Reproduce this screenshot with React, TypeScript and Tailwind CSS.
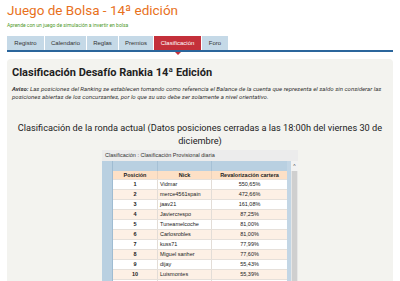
const tabs = ['Registro', 'Calendario', 'Reglas', 'Premios', 'Clasificación', 'Foro']
const tabWidths = ['w-[37px]', 'w-[41px]', 'w-[31px]', 'w-[34px]', 'w-[47px]', 'w-[26px]']

const ranking = [
  { pos: 1, nick: 'Vidmar', value: '550,65%' },
  { pos: 2, nick: 'merce4561spain', value: '472,66%' },
  { pos: 3, nick: 'jaav21', value: '161,08%' },
  { pos: 4, nick: 'Javiercrespo', value: '87,25%' },
  { pos: 5, nick: 'Tuneamelcoche', value: '81,00%' },
  { pos: 6, nick: 'Carlosrobles', value: '81,00%' },
  { pos: 7, nick: 'kuss71', value: '77,99%' },
  { pos: 8, nick: 'Miguel sanher', value: '77,60%' },
  { pos: 9, nick: 'dijay', value: '55,43%' },
  { pos: 10, nick: 'Luismontes', value: '55,39%' },
]

export default function App() {
  return (
    <div className="h-[281px] w-[400px] overflow-hidden bg-white px-[7px] font-['Roboto',sans-serif] text-[#222]">
      <h1 className="pt-px text-[13.5px] leading-[18px] text-[#e8711c]">Juego de Bolsa - 14ª edición</h1>
      <p className="mt-[3px] text-[5px] leading-[7px] text-[#4f9a2a]">Aprende con un juego de simulación a invertir en bolsa</p>

      <nav className="mt-[7px] flex gap-px border-b-2 border-[#2b669c] font-['Liberation_Sans',sans-serif]">
        {tabs.map((tab, i) => {
          const active = tab === 'Clasificación'
          return (
            <div
              key={tab}
              className={`relative flex h-[14px] items-center justify-center text-[6px] ${tabWidths[i]} ${active ? 'bg-[#c4303a] text-white' : 'bg-[#c5d9e7] text-[#333]'}`}
            >
              {tab}
              {active && (
                <span className="absolute -bottom-[5px] left-1/2 h-0 w-0 -translate-x-1/2 border-x-[3px] border-t-[3px] border-x-transparent border-t-[#c4303a]" />
              )}
            </div>
          )
        })}
      </nav>

      <div className="mt-[7px] h-[230px] rounded-t-[4px] bg-[#f3f3ef] px-[5px] pt-[7px]">
        <h2 className="text-[11px] font-bold leading-[14px] text-[#1f1f1f]">Clasificación Desafío Rankia 14ª Edición</h2>
        <p className="mt-[5px] pr-[2px] text-[6.1px] italic leading-[8px] text-[#333]">
          <b>Aviso:</b> Las posiciones del Ranking se establecen tomando como referencia el Balance de la cuenta que representa el saldo sin considerar las posiciones abiertas de los concursantes, por lo que su uso debe ser solamente a nivel orientativo.
        </p>

        <p className="mt-[21px] text-center text-[9.2px] leading-[12.5px] text-[#222]">
          Clasificación de la ronda actual (Datos posiciones cerradas a las 18:00h del viernes 30 de diciembre)
        </p>

        <div className="mx-auto mt-[3px] w-[196px] font-['Liberation_Sans',sans-serif]">
          <div className="flex h-[11px] items-center bg-[#ececec] pl-[3px] text-[5.5px] text-[#333]">
            Clasificación : Clasificación Provisional diaria
          </div>
          <div className="flex bg-[#b9d0e1]">
            <div className="w-[11px] border-r border-[#9fbcd2]" />
            <div className="w-[174px]">
              <div className="flex h-[10px]">
                <div className="w-[45px] border-r border-[#a6c1d6]" />
                <div className="w-[54px] border-r border-[#a6c1d6]" />
                <div className="flex-1" />
              </div>
              <div className="flex h-[8px] items-center bg-[#fde0c6] text-[5.5px] font-bold text-[#222]">
                <div className="w-[45px] border-r border-[#e9d2be] text-center">Posición</div>
                <div className="w-[54px] border-r border-[#e9d2be] text-center">Nick</div>
                <div className="flex-1 text-center">Revalorización cartera</div>
              </div>
              {ranking.map((row) => (
                <div
                  key={row.pos}
                  className={`flex h-[10px] items-center border-t border-[#e6e0da] text-[5.5px] text-[#222] ${row.pos % 2 === 0 ? 'bg-[#fdf0e5]' : 'bg-white'}`}
                >
                  <div className="flex h-full w-[45px] items-center justify-center border-r border-[#e3ddd7] font-bold">{row.pos}</div>
                  <div className="flex h-full w-[54px] items-center border-r border-[#e3ddd7] pl-[2px]">{row.nick}</div>
                  <div className="flex-1 text-center">{row.value}</div>
                </div>
              ))}
              <div className="flex h-[10px] border-t border-[#e6e0da] bg-white">
                <div className="h-full w-[45px] border-r border-[#e3ddd7]" />
                <div className="h-full w-[54px] border-r border-[#e3ddd7]" />
              </div>
            </div>
            <div className="w-[4px] bg-[#c3d6e5]" />
            <div className="flex w-[7px] flex-col bg-[#e6e6e6]">
              <div className="flex h-[10px] items-center justify-center bg-[#f2f2f2] text-[5px] leading-none text-[#444]">^</div>
              <div className="ml-px w-[5px] flex-1 bg-[#cfcfcf]" />
            </div>
          </div>
        </div>
      </div>
    </div>
  )
}
